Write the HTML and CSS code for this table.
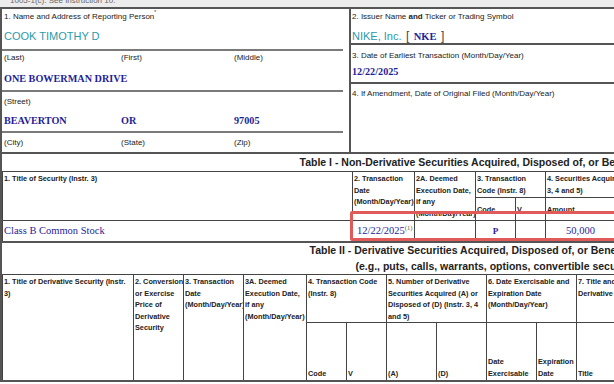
FILE: index.html
```html
<!DOCTYPE html>
<html>
<head>
<meta charset="utf-8">
<link rel="stylesheet" href="styles.css">
</head>
<body>
<div class="topband"><span>1005-1(c). See Instruction 10.</span></div>
<div class="form">
  <div class="hdr">
    <div class="hdr-left">
      <div class="blk b1">
        <div class="lbl">1. Name and Address of Reporting Person<sup>*</sup></div>
        <div class="name">COOK TIMOTHY D</div>
      </div>
      <div class="blk b2">
        <div class="trio lbl"><span>(Last)</span><span>(First)</span><span>(Middle)</span></div>
        <div class="fd big hb">ONE BOWERMAN DRIVE</div>
      </div>
      <div class="blk b3">
        <div class="lbl">(Street)</div>
        <div class="trio fd big hb"><span>BEAVERTON</span><span>OR</span><span>97005</span></div>
      </div>
      <div class="blk b4">
        <div class="trio lbl"><span>(City)</span><span>(State)</span><span>(Zip)</span></div>
      </div>
    </div>
    <div class="hdr-right">
      <div class="rblk r1">
        <div class="lbl">2. Issuer Name <b>and</b> Ticker or Trading Symbol</div>
        <div class="issuer"><span class="name">NIKE, Inc.</span> <span class="brk">[</span> <span class="fd tick">NKE</span> <span class="brk">]</span></div>
      </div>
      <div class="rblk r2">
        <div class="lbl">3. Date of Earliest Transaction (Month/Day/Year)</div>
        <div class="fd big d3">12/22/2025</div>
      </div>
      <div class="rblk r3">
        <div class="lbl">4. If Amendment, Date of Original Filed (Month/Day/Year)</div>
      </div>
    </div>
  </div>

  <div class="t1wrap">
    <table class="grid t1">
      <colgroup>
        <col class="w350"><col class="w62"><col class="w61"><col class="w40"><col class="w30"><col class="w70"><col class="w70"><col class="w80"><col class="w110"><col class="w80"><col class="w80">
      </colgroup>
      <tr><td colspan="11" class="ttl ttl1">Table I - Non-Derivative Securities Acquired, Disposed of, or Beneficially Owned</td></tr>
      <tr class="h1">
        <th rowspan="2">1. Title of Security (Instr. 3)</th>
        <th rowspan="2">2. Transaction<br>Date<br>(Month/Day/Year)</th>
        <th rowspan="2">2A. Deemed<br>Execution Date,<br>if any<br>(Month/Day/Year)</th>
        <th colspan="2">3. Transaction<br>Code (Instr. 8)</th>
        <th colspan="3">4. Securities Acquired (A) or Disposed Of (D) (Instr.<br>3, 4 and 5)</th>
        <th rowspan="2">5. Amount of Securities<br>Beneficially Owned</th>
        <th rowspan="2">6. Ownership<br>Form</th>
        <th rowspan="2">7. Nature of<br>Indirect</th>
      </tr>
      <tr class="h2">
        <th>Code</th><th>V</th><th>Amount</th><th>(A) or (D)</th><th>Price</th>
      </tr>
      <tr class="dr">
        <td class="fd big cl">Class B Common Stock</td>
        <td class="fd big dt">12/22/2025<sup class="fn">(1)</sup></td>
        <td></td>
        <td class="fd ctr code">P</td>
        <td></td>
        <td class="fd big ctr">50,000</td>
        <td class="fd big ctr">A</td>
        <td class="fd big ctr">$0</td>
        <td></td><td></td><td></td>
      </tr>
    </table>
    <div class="hilite"></div>
  </div>

  <table class="grid t2">
    <colgroup>
      <col class="w131"><col class="w50"><col class="w60"><col class="w63"><col class="w40"><col class="w40"><col class="w50"><col class="w50"><col class="w50"><col class="w40"><col class="w40"><col class="w160"><col class="w70"><col class="w70">
    </colgroup>
    <tr><td colspan="14" class="ttl ttl2">
      <div class="l1">Table II - Derivative Securities Acquired, Disposed of, or Beneficially Owned</div>
      <div class="l2">(e.g., puts, calls, warrants, options, convertible securities)</div>
    </td></tr>
    <tr class="g1">
      <th rowspan="2">1. Title of Derivative Security (Instr.<br>3)</th>
      <th rowspan="2">2. Conversion<br>or Exercise<br>Price of<br>Derivative<br>Security</th>
      <th rowspan="2">3. Transaction<br>Date<br>(Month/Day/Year)</th>
      <th rowspan="2">3A. Deemed<br>Execution Date,<br>if any<br>(Month/Day/Year)</th>
      <th colspan="2">4. Transaction Code<br>(Instr. 8)</th>
      <th colspan="2">5. Number of Derivative<br>Securities Acquired (A) or<br>Disposed of (D) (Instr. 3, 4<br>and 5)</th>
      <th colspan="2">6. Date Exercisable and<br>Expiration Date<br>(Month/Day/Year)</th>
      <th colspan="2">7. Title and Amount of Securities Underlying<br>Derivative Security (Instr. 3 and 4)</th>
      <th rowspan="2">8. Price of<br>Derivative</th>
      <th rowspan="2">9. Number of<br>derivative</th>
    </tr>
    <tr class="g2">
      <th>Code</th><th>V</th><th>(A)</th><th>(D)</th><th>Date<br>Exercisable</th><th>Expiration<br>Date</th><th>Title</th><th>Amount or Number of Shares</th>
    </tr>
  </table>
</div>
</body>
</html>
```

FILE: styles.css
```css
html, body {
  margin: 0;
  padding: 0;
  background: #fff;
  overflow: hidden;
}
body {
  width: 614px;
  height: 384px;
  font-family: "Liberation Sans", Arial, sans-serif;
  color: #222;
}
.topband {
  height: 7px;
  background: #ececec;
  overflow: hidden;
}
.topband span {
  display: block;
  margin-top: -4px;
  line-height: 10px;
  font-size: 8px;
  color: #666;
  padding-left: 10px;
}
.form {
  width: 1033px;
  border-left: 2px solid #555;
  border-top: 2px solid #555;
}
.hdr {
  display: flex;
  border-bottom: 2px solid #555;
}
.hdr-left {
  width: 347px;
  border-right: 2px solid #555;
}
.hdr-right {
  flex: 1;
  display: flex;
  flex-direction: column;
}
.lbl {
  font-size: 8px;
  line-height: 12px;
  color: #222;
  white-space: nowrap;
}
.lbl sup {
  font-size: 5px;
  vertical-align: 5px;
  line-height: 0;
}
.name {
  font-size: 11px;
  line-height: 14px;
  color: #2c9aab;
}
.fd {
  font-family: "Liberation Serif", "Times New Roman", serif;
  color: #1e1e98;
}
.big {
  font-size: 10.5px;
  line-height: 14px;
}
.hb {
  font-weight: bold;
  font-size: 10.2px;
}
.blk {
  margin-right: 6px;
  padding-left: 2px;
  box-sizing: border-box;
  border-bottom: 2px solid #7a7a7a;
}
.b1 { height: 42px; padding-top: 2px; }
.b1 .name { margin-top: 6px; }
.b2 { height: 41px; padding-top: 1px; }
.b2 .fd { margin-top: 8px; }
.b3 { height: 41px; padding-top: 4px; }
.b3 .fd { margin-top: 6px; }
.b4 { height: 19px; padding-top: 4px; border-bottom: none; }
.trio {
  display: grid;
  grid-template-columns: 117px 113px 1fr;
}
.rblk {
  padding-left: 1px;
  box-sizing: border-box;
  border-bottom: 2px solid #555;
}
.r1 { height: 36px; padding-top: 2px; }
.r2 { height: 39px; padding-top: 5px; }
.r3 { flex: 1; padding-top: 4px; border-bottom: none; }
.issuer {
  margin-top: 5px;
  line-height: 14px;
  white-space: nowrap;
}
.brk {
  font-size: 12px;
  color: #444;
}
.tick {
  font-size: 10.5px;
  font-weight: bold;
}
.d3 { margin-top: 3px; font-weight: bold; font-size: 10.2px; }

/* tables */
.grid {
  border-collapse: collapse;
  table-layout: fixed;
}
.t1 { width: 1033px; }
.t2 { width: 914px; }
.grid th, .grid td {
  border: 1px solid #444;
  padding: 0;
  overflow: hidden;
}
.grid th {
  font-size: 7.3px;
  font-weight: bold;
  line-height: 11.5px;
  text-align: left;
  vertical-align: top;
  padding: 1px 0 0 1px;
  white-space: nowrap;
  color: #222;
}
.w30 { width: 30px; } .w40 { width: 40px; } .w50 { width: 50px; }
.w60 { width: 60px; } .w61 { width: 61px; } .w62 { width: 62px; }
.w63 { width: 63px; } .w70 { width: 70px; } .w80 { width: 80px; }
.w110 { width: 110px; } .w131 { width: 131px; } .w160 { width: 160px; }
.w350 { width: 350px; }

.grid td.ttl {
  border-top: none;
  border-left: none;
  font-weight: bold;
  font-size: 10.5px;
  white-space: nowrap;
  color: #222;
}
.grid td.ttl1 {
  height: 17px;
  line-height: 17px;
  padding-left: 297px;
}
.t1 .h1 th { height: 24px; }
.t1 .h2 th { height: 21px; vertical-align: middle; }
.t1 .dr td { height: 20px; vertical-align: middle; border-bottom: 2px solid #555; }
.grid td.cl { padding-left: 1px; }
.grid td.dt { padding-left: 4px; white-space: nowrap; }
.fn {
  font-size: 6.5px;
  color: #5a5a3a;
  vertical-align: 4px;
  line-height: 0;
}
.ctr { text-align: center; }
.code { font-size: 9px; font-weight: bold; }
.t1wrap {
  position: relative;
}
.hilite {
  position: absolute;
  left: 348px;
  top: 57px;
  width: 400px;
  height: 24px;
  border: 3px solid #e05a5a;
  border-radius: 2px;
}
.grid td.ttl2 {
  height: 31px;
  padding: 0;
}
.ttl2 .l1 { line-height: 15px; padding-left: 307px; }
.ttl2 .l2 { line-height: 16px; padding-left: 353px; }
.t2 .g1 th { height: 45px; }
.t2 .g2 th { height: 55px; vertical-align: bottom; padding-bottom: 1px; }
.t2 tr:last-child th { border-bottom: 2px solid #555; }
.t2 .g1 th[rowspan] { border-bottom: 2px solid #555; }
```
